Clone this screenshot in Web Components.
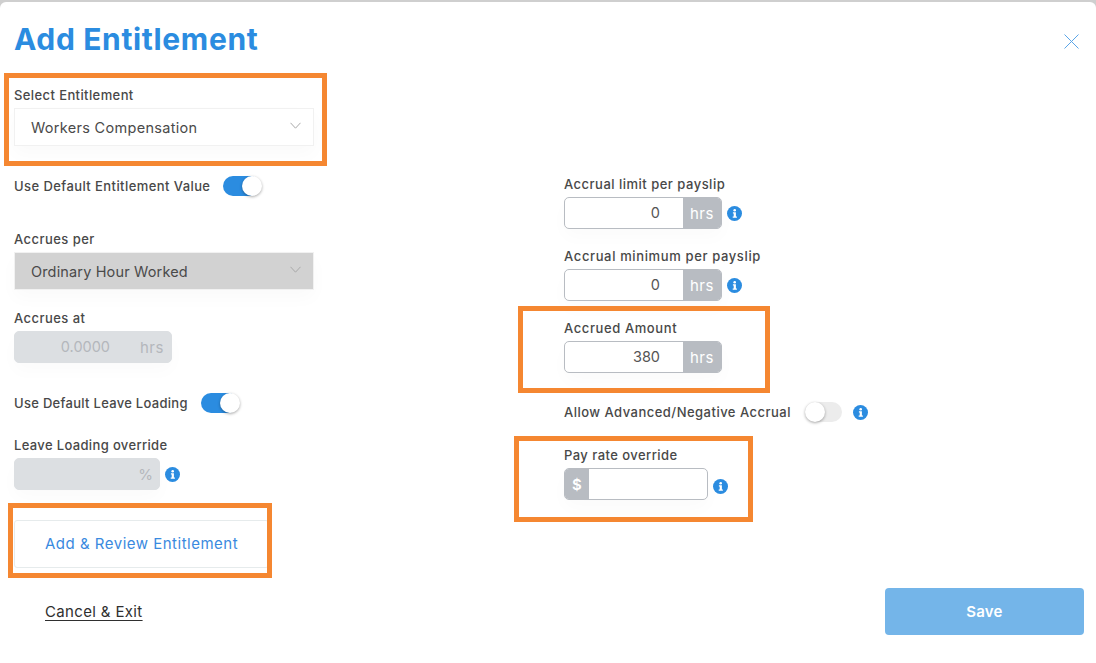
<!DOCTYPE html>
<html>
<head>
<meta charset="utf-8">
<title>Add Entitlement</title>
<style>
  html, body { margin: 0; padding: 0; background: #fff; }
  body { font-family: 'Inter', 'Open Sans', sans-serif; color: #4a4a4a; }
</style>
</head>
<body>
<entitlement-modal>
  <span slot="title">Add Entitlement</span>

  <div slot="left">
    <mark-box style="--m:-12px -13px -20px -10px">
      <ui-field label="Select Entitlement" style="--ls:0.4px">
        <ui-select value="Workers Compensation" style="--vs:0.3px"></ui-select>
      </ui-field>
    </mark-box>
    <ui-toggle on style="--top:30px;--ls:0.42px" gap="13" label="Use Default Entitlement Value"></ui-toggle>
    <ui-field label="Accrues per" style="--top:33px">
      <ui-select disabled value="Ordinary Hour Worked" style="--vs:0.15px"></ui-select>
    </ui-field>
    <ui-field label="Accrues at" style="--top:18px">
      <ui-input disabled value="0.0000" unit="hrs"></ui-input>
    </ui-field>
    <ui-toggle on style="--top:30px;--ls:0.29px" gap="13" label="Use Default Leave Loading"></ui-toggle>
    <ui-field label="Leave Loading override" style="--top:22px;--ls:0.35px">
      <ui-input disabled unit="%" width="146" unit-width="27" info></ui-input>
    </ui-field>
    <mark-box style="--m:-17px -3px -10px -6px;margin-top:30px">
      <ui-button>Add &amp; Review Entitlement</ui-button>
    </mark-box>
  </div>

  <div slot="right">
    <ui-field label="Accrual limit per payslip" style="--top:89px;--ls:0.49px">
      <ui-input value="0" unit="hrs" info></ui-input>
    </ui-field>
    <ui-field label="Accrual minimum per payslip" style="--top:17px;--ls:0.63px">
      <ui-input value="0" unit="hrs" info></ui-input>
    </ui-field>
    <mark-box style="--m:-12px -48px -20px -46px;margin-top:17px">
      <ui-field label="Accrued Amount" style="--ls:0.6px">
        <ui-input value="380" unit="hrs"></ui-input>
      </ui-field>
    </mark-box>
    <ui-toggle style="--top:29px;--ls:0.48px" gap="14" label="Allow Advanced/Negative Accrual" info></ui-toggle>
    <mark-box style="--m:-9px -25px -22px -50px;margin-top:23px">
      <ui-field label="Pay rate override">
        <ui-input prefix="$" width="144" info style="--info-drop:4px"></ui-input>
      </ui-field>
    </mark-box>
  </div>

  <a slot="cancel">Cancel &amp; Exit</a>
  <span slot="save">Save</span>
</entitlement-modal>

<script>
class EntitlementModal extends HTMLElement {
  constructor() {
    super();
    this.attachShadow({ mode: 'open' });
  }

  connectedCallback() {
    this.shadowRoot.innerHTML = `
      <style>
        :host { display: block; background: #cfcfcf; padding-top: 2px; height: 661px; overflow: hidden; }
        .modal { background: #fff; border-radius: 6px 6px 0 0; height: 661px; display: flex; flex-direction: column; }
        .head { height: 83px; padding: 0 16px 0 14px; display: flex; justify-content: space-between; box-sizing: border-box; }
        h1 { margin: 19px 0 0; font-size: 30px; line-height: 36px; font-weight: 700; color: #2b8ce0; letter-spacing: 0.65px; }
        .close { margin-top: 31px; width: 17px; height: 17px; }
        .body { display: grid; grid-template-columns: 550px 1fr; padding-left: 14px; }
        .foot { margin-top: 20px; padding: 0 12px 0 45px; display: flex; justify-content: space-between; align-items: center; }
        ::slotted(a) { font-size: 15px; color: #2f2f2f; text-decoration: underline; text-underline-offset: 3px; letter-spacing: 0.35px; }
        .save { width: 199px; height: 47px; border-radius: 4px; background: #74b5e9; color: #fff; font-size: 15px; font-weight: 600; letter-spacing: 0.2px; display: flex; align-items: center; justify-content: center; }
      </style>
      <div class="modal">
        <div class="head">
          <h1><slot name="title"></slot></h1>
          <svg class="close" viewBox="0 0 17 17" fill="none" stroke="#5aa5e8" stroke-width="1"><path d="M1.5 1.5l14 14M15.5 1.5l-14 14"/></svg>
        </div>
        <div class="body">
          <div><slot name="left"></slot></div>
          <div><slot name="right"></slot></div>
        </div>
        <div class="foot">
          <slot name="cancel"></slot>
          <div class="save"><slot name="save"></slot></div>
        </div>
      </div>
    `;
  }
}

class MarkBox extends HTMLElement {
  constructor() {
    super();
    this.attachShadow({ mode: 'open' });
  }

  connectedCallback() {
    this.shadowRoot.innerHTML = `
      <style>
        :host { display: block; position: relative; width: fit-content; }
        .mark { position: absolute; inset: var(--m); border: 5px solid #f58731; pointer-events: none; }
      </style>
      <slot></slot><div class="mark"></div>
    `;
  }
}

class UiField extends HTMLElement {
  constructor() {
    super();
    this.attachShadow({ mode: 'open' });
  }

  connectedCallback() {
    this.shadowRoot.innerHTML = `
      <style>
        :host { display: block; margin-top: var(--top, 0); }
        .label { font-size: 13px; line-height: 20px; font-weight: 500; letter-spacing: var(--ls, 0.45px); color: #484848; margin-bottom: 3px; white-space: nowrap; }
      </style>
      <div class="label">${this.getAttribute('label')}</div>
      <slot></slot>
    `;
  }
}

class UiSelect extends HTMLElement {
  constructor() {
    super();
    this.attachShadow({ mode: 'open' });
  }

  connectedCallback() {
    const off = this.hasAttribute('disabled');
    this.shadowRoot.innerHTML = `
      <style>
        :host { display: block; width: 300px; }
        .box {
          height: 38px; box-sizing: border-box; padding: 0 12px 0 16px;
          display: flex; align-items: center; justify-content: space-between;
          border: 1px solid #f1f1f1; font-size: 14.5px; letter-spacing: var(--vs, 0.2px); color: #4a4a4a;
          background: ${off ? '#d2d2d2' : '#fff'};
          box-shadow: 0 8px 18px rgba(0, 0, 0, 0.025);
        }
        svg { width: 11px; height: 7px; margin-bottom: 3px; }
      </style>
      <div class="box">
        <span>${this.getAttribute('value')}</span>
        <svg viewBox="0 0 11 7" fill="none" stroke="#a9a9a9"><path d="M.5.8l5 5.4 5-5.4"/></svg>
      </div>
    `;
  }
}

class InfoIcon extends HTMLElement {
  constructor() {
    super();
    this.attachShadow({ mode: 'open' });
  }

  connectedCallback() {
    this.shadowRoot.innerHTML = `
      <style>
        :host { display: inline-flex; width: 15px; height: 15px; flex: none; margin-top: var(--info-drop, 1px); }
        svg { width: 15px; height: 15px; }
      </style>
      <svg viewBox="0 0 15 15">
        <circle cx="7.5" cy="7.5" r="7.5" fill="#2b8ce0"/>
        <circle cx="7.7" cy="4.2" r="1.3" fill="#fff"/>
        <path d="M5.9 6.3h3v4.2h1v1.3H5.7v-1.3h1V7.6h-.8z" fill="#fff"/>
      </svg>
    `;
  }
}

class UiToggle extends HTMLElement {
  constructor() {
    super();
    this.attachShadow({ mode: 'open' });
  }

  connectedCallback() {
    const on = this.hasAttribute('on');
    this.shadowRoot.innerHTML = `
      <style>
        :host { display: flex; align-items: center; height: 20px; margin-top: var(--top, 0); --info-drop: 0; }
        .label { font-size: 13px; font-weight: 500; letter-spacing: var(--ls, 0.45px); color: #484848; white-space: nowrap; }
        .track { position: relative; width: 37px; height: 20px; border-radius: 10px; background: ${on ? '#2b8ce0' : '#ececec'}; margin-left: ${this.getAttribute('gap')}px; margin-right: 11px; }
        .knob { position: absolute; top: 0; ${on ? 'right: -2px' : 'left: 0'}; width: 20px; height: 20px; border-radius: 50%; background: #fff; box-shadow: 0 1px 3px rgba(0, 0, 0, 0.35); }
      </style>
      <span class="label">${this.getAttribute('label')}</span>
      <div class="track"><div class="knob"></div></div>
      ${this.hasAttribute('info') ? '<info-icon></info-icon>' : ''}
    `;
  }
}

class UiInput extends HTMLElement {
  constructor() {
    super();
    this.attachShadow({ mode: 'open' });
  }

  connectedCallback() {
    const off = this.hasAttribute('disabled');
    const unit = this.getAttribute('unit');
    const prefix = this.getAttribute('prefix');
    const width = this.getAttribute('width') || 158;
    const unitWidth = this.getAttribute('unit-width') || 39;
    this.shadowRoot.innerHTML = `
      <style>
        :host { display: flex; align-items: center; gap: 5px; }
        .box {
          width: ${width}px; height: 32px; box-sizing: border-box; display: flex; overflow: hidden;
          border-radius: 5px; border: 1px solid ${off ? '#dcdfe2' : '#b8bcc2'};
          background: ${off ? '#dcdfe2' : '#fff'}; font-size: 14.5px;
          box-shadow: 0 8px 18px rgba(0, 0, 0, 0.02);
        }
        .value { flex: 1; padding-right: 23px; line-height: 30px; text-align: right; color: ${off ? '#b4b7bc' : '#555'}; }
        .unit, .prefix { display: flex; align-items: center; justify-content: center; font-size: 15px; flex: none; }
        .unit { width: ${unitWidth - 1}px; letter-spacing: 0.6px; color: ${off ? '#b4b7bc' : '#fff'}; background: ${off ? 'transparent' : '#b8bcc2'}; }
        .prefix { width: 24px; color: #fff; background: #b8bcc2; font-weight: 600; }
      </style>
      <div class="box">
        ${prefix ? `<span class="prefix">${prefix}</span>` : ''}
        <span class="value">${this.getAttribute('value') || ''}</span>
        ${unit ? `<span class="unit">${unit}</span>` : ''}
      </div>
      ${this.hasAttribute('info') ? '<info-icon></info-icon>' : ''}
    `;
  }
}

class UiButton extends HTMLElement {
  constructor() {
    super();
    this.attachShadow({ mode: 'open' });
  }

  connectedCallback() {
    this.shadowRoot.innerHTML = `
      <style>
        :host {
          display: flex; align-items: center; width: 255px; height: 48px; box-sizing: border-box;
          padding: 0 0 2px 30px; border: 1px solid #e6ebec; border-radius: 3px;
          font-size: 15px; letter-spacing: 0.5px; color: #3a8ae0; background: #fff; white-space: nowrap;
        }
      </style>
      <slot></slot>
    `;
  }
}

customElements.define('entitlement-modal', EntitlementModal);
customElements.define('mark-box', MarkBox);
customElements.define('ui-field', UiField);
customElements.define('ui-select', UiSelect);
customElements.define('info-icon', InfoIcon);
customElements.define('ui-toggle', UiToggle);
customElements.define('ui-input', UiInput);
customElements.define('ui-button', UiButton);
</script>
</body>
</html>
